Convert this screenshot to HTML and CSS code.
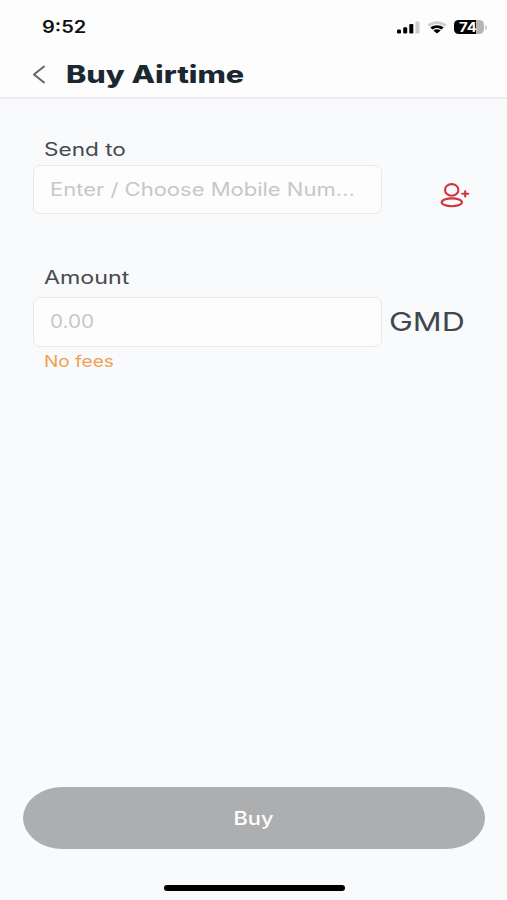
FILE: index.html
```html
<!DOCTYPE html>
<html lang="en">
<head>
<meta charset="utf-8">
<title>Buy Airtime</title>
<link rel="stylesheet" href="styles.css">
</head>
<body>
<div class="screen">
  <header class="top">
    <div class="status">
      <span class="wide time">9:52</span>
      <div class="indicators">
        <svg class="signal" width="24" height="13" viewBox="0 0 24 13"><rect x="1" y="8.5" width="4" height="4" rx="1.2"/><rect x="7.2" y="6.200" width="4" height="6.300" rx="1.2"/><rect x="13.300" y="3" width="4" height="9.500" rx="1.2"/><rect class="dim" x="19.500" y="0.5" width="4" height="12" rx="1.2"/></svg>
        <svg class="wifi" width="20" height="13" viewBox="0 0 20 13"><path class="dim" d="M.5 3.8C6-1 14-1 19.500 3.800L17.500 5.800C13 2 7 2 2.500 5.800Z"/><path d="M3.300 6.600C7.200 3.400 12.800 3.400 16.700 6.600L14.500 8.600C11.800 6.500 8.200 6.500 5.500 8.600Z"/><path d="M6.300 9.400C8.500 7.700 11.500 7.700 13.700 9.400L10 12.500Z"/></svg>
        <div class="battery"><span class="wide level">74</span></div>
        <span class="nub"></span>
      </div>
    </div>
    <div class="nav">
      <svg class="back" width="14" height="20" viewBox="0 0 14 20"><path d="M12 1.500 2 9.500 12 17.500"/></svg>
      <h1 class="wide title">Buy Airtime</h1>
    </div>
  </header>
  <main class="form">
    <label class="wide label send">Send to</label>
    <div class="row">
      <div class="field"><span class="wide hint phone">Enter / Choose Mobile Num...</span></div>
      <svg class="contact" width="30" height="26" viewBox="0 0 30 26"><ellipse cx="11.700" cy="7.900" rx="6.700" ry="5.800"/><ellipse cx="11.800" cy="20.300" rx="10.200" ry="3.900"/><path d="M22.300 11.800H28.200M25.200 9.200V14.400"/></svg>
    </div>
    <label class="wide label amount">Amount</label>
    <div class="row">
      <div class="field tall"><span class="wide hint zero">0.00</span></div>
      <span class="wide currency">GMD</span>
    </div>
    <p class="wide fees">No fees</p>
  </main>
  <footer class="bottom">
    <button class="buy"><span class="wide buy-text">Buy</span></button>
    <div class="home"></div>
  </footer>
</div>
</body>
</html>
```
FILE: styles.css
```css
* { box-sizing: border-box; }
body { margin: 0; font-family: Inter, "Liberation Sans", sans-serif; }
.screen { width: 507px; height: 900px; display: flex; flex-direction: column; background: #f9fafc; overflow: hidden; }
.wide { display: block; width: max-content; transform-origin: left center; white-space: nowrap; }
.top { height: 99px; background: #fdfdfd; border-bottom: 2px solid #ededef; }
.status { height: 52px; padding: 2px 20px 0 42px; display: flex; align-items: center; justify-content: space-between; }
.time { font-size: 17px; line-height: 20px; font-weight: 600; color: #111; transform: scaleX(1.18); }
.indicators { display: flex; align-items: center; }
.dim { fill: #ccc; }
.wifi { margin-left: 7px; }
.battery { width: 30px; height: 14px; margin-left: 7px; border-radius: 4.500px; background: linear-gradient(90deg, #050505 74%, #b5b5b5 74%); }
.level { margin-left: 5px; font-size: 13px; line-height: 14px; font-weight: 700; color: #fff; transform: scaleX(1.15); }
.nub { width: 2px; height: 5px; margin-left: 1px; border-radius: 0 2px 2px 0; background: #ccc; }
.nav { height: 45px; padding-left: 32px; display: flex; align-items: center; }
.back path { fill: none; stroke: #626466; stroke-width: 2; stroke-linecap: round; stroke-linejoin: round; }
.title { margin: 0 0 0 20px; font-size: 24px; line-height: 32px; font-weight: 800; color: #1b2831; transform: scaleX(1.275); }
.form { flex: 1; padding: 39px 33px 0; }
.label { margin-left: 11px; font-size: 18px; line-height: 24px; color: #46494d; }
.row { display: flex; align-items: center; }
.field { width: 349px; height: 49px; padding-left: 16px; display: flex; align-items: center; border: 1px solid #e9eaec; border-radius: 7px; background: #fdfdfd; }
.tall { height: 50px; }
.send { margin-bottom: 3px; transform: scaleX(1.255); }
.amount { margin-top: 52px; margin-bottom: 7px; transform: scaleX(1.29); }
.hint { font-size: 18px; line-height: 24px; color: #c7c7c8; }
.phone { transform: scaleX(1.222); }
.zero { transform: scaleX(1.15); }
.contact { margin: 11px 0 0 58px; fill: none; stroke: #d0343c; stroke-width: 2.100; stroke-linecap: round; }
.currency { margin: 0 0 0 7px; font-size: 26px; line-height: 34px; color: #41474d; transform: scaleX(1.23); }
.fees { margin: 4px 0 0 11px; font-size: 16px; line-height: 20px; color: #eda052; transform: scaleX(1.19); }
.bottom { height: 113px; padding: 0 22px 0 23px; }
.buy { width: 462px; height: 62px; padding: 0; display: flex; align-items: center; justify-content: center; border: 0; border-radius: 40px / 31px; background: #adaeb0; font-family: inherit; }
.buy-text { margin-top: 1px; font-size: 18px; line-height: 24px; font-weight: 500; color: #fff; transform: scaleX(1.21); transform-origin: center; }
.home { width: 181px; height: 6px; margin: 36px auto 0 141px; border-radius: 3px; background: #000; }
```
